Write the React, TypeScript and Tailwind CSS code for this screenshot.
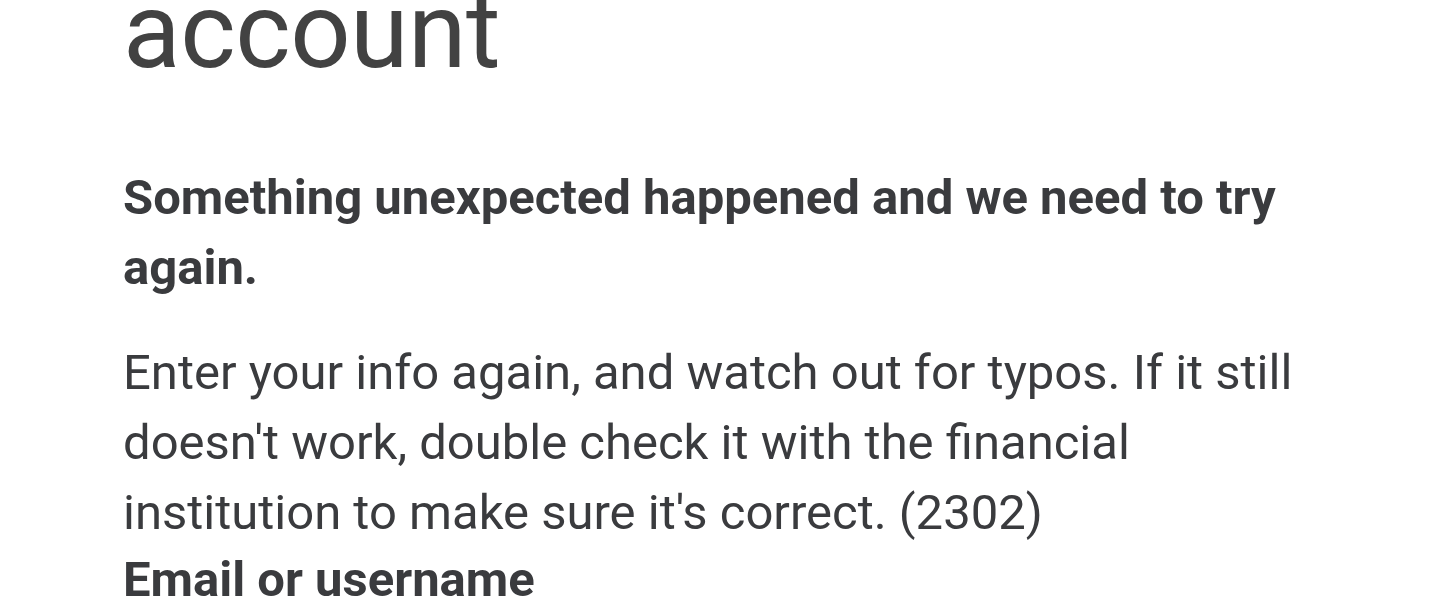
import React from 'react';

const App: React.FC = () => {
  return (
    <div className="min-h-screen bg-white overflow-hidden" style={{ fontFamily: 'Roboto, "Noto Sans", sans-serif' }}>
      <div className="px-[123px] max-w-[1440px]">
        <h1 className="-mt-[22px] text-[106px] leading-[106px] font-normal text-[#424242] tracking-[-0.5px]">
          account
        </h1>
        <p className="mt-[79px] text-[49px] leading-[70px] font-bold text-[#3a3b3e]">
          Something unexpected happened and we need to try again.
        </p>
        <p className="mt-[35px] text-[49px] leading-[70px] font-normal text-[#3a3b3e]">
          Enter your info again, and watch out for typos. If it still doesn't work, double check it with the financial
          institution to make sure it's correct. (2302)
        </p>
        <label className="block -mt-[3px] text-[49px] leading-[70px] font-bold text-[#3a3b3e]">
          Email or username
        </label>
      </div>
    </div>
  );
};

export default App;
